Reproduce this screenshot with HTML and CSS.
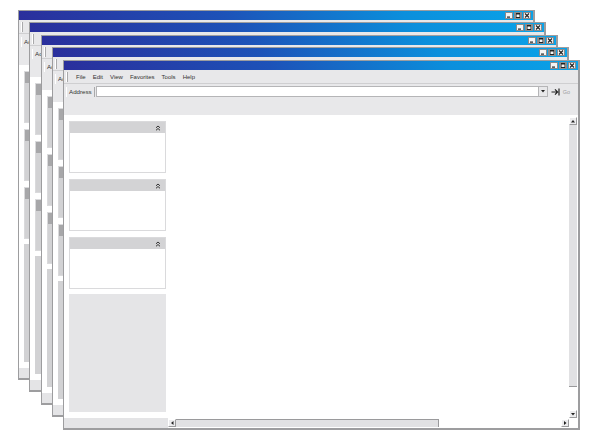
FILE: index.html
```html
<!DOCTYPE html>
<html lang="en">
<head>
  <meta charset="UTF-8" />
  <title>Windows</title>
  <link rel="stylesheet" href="styles.css">
</head>
<body>
  <div class="desk" id="desk">
    <div class="window win-5" id="plantilla">
      <div class="titlebar">
        <span class="ctl"><svg width="6" height="5" viewBox="0 0 6 5"><rect x="1" y="3.5" width="3" height="1.2" fill="#222"/></svg></span>
        <span class="ctl"><svg width="6" height="5" viewBox="0 0 6 5"><rect x="1" y="0.5" width="4" height="4" fill="none" stroke="#222" stroke-width="1"/><rect x="1" y="0.5" width="4" height="1" fill="#222"/></svg></span>
        <span class="ctl"><svg width="6" height="5" viewBox="0 0 6 5"><path d="M1 0.5 L5 4.5 M5 0.5 L1 4.5" stroke="#222" stroke-width="1.1"/></svg></span>
      </div>

      <div class="menubar">
        <span class="grip"></span>
        <span>File</span>
        <span>Edit</span>
        <span>View</span>
        <span>Favorites</span>
        <span>Tools</span>
        <span>Help</span>
      </div>

      <div class="addressbar">
        <span class="addr-label">Address</span>
        <div class="addr-input">
          <span class="addr-drop"><svg width="4" height="3" viewBox="0 0 4 3"><path d="M0 0 H4 L2 2.5 Z" fill="#222"/></svg></span>
        </div>
        <span class="go">
          <svg width="9" height="8" viewBox="0 0 9 8"><path d="M0.5 4 H6.5 M4 1.3 L6.6 4 L4 6.7 M8 0.5 V7.5" stroke="#222" stroke-width="1.2" fill="none"/></svg>
          <span>Go</span>
        </span>
      </div>

      <div class="band"></div>

      <div class="main">
        <aside class="sidebar">
          <div class="panel">
            <div class="panel-head"><svg width="6" height="6" viewBox="0 0 6 6"><path d="M1 2.8 L3 1 L5 2.8 M1 5.3 L3 3.5 L5 5.3" stroke="#333" stroke-width="1" fill="none"/></svg></div>
            <div class="panel-body"></div>
          </div>
          <div class="panel">
            <div class="panel-head"><svg width="6" height="6" viewBox="0 0 6 6"><path d="M1 2.8 L3 1 L5 2.8 M1 5.3 L3 3.5 L5 5.3" stroke="#333" stroke-width="1" fill="none"/></svg></div>
            <div class="panel-body"></div>
          </div>
          <div class="panel">
            <div class="panel-head"><svg width="6" height="6" viewBox="0 0 6 6"><path d="M1 2.8 L3 1 L5 2.8 M1 5.3 L3 3.5 L5 5.3" stroke="#333" stroke-width="1" fill="none"/></svg></div>
            <div class="panel-body"></div>
          </div>
          <div class="side-fill"></div>
        </aside>

        <section class="page"></section>

        <div class="vscroll">
          <span class="sbtn"><svg width="4" height="3" viewBox="0 0 4 3"><path d="M0 2.5 H4 L2 0 Z" fill="#222"/></svg></span>
          <span class="vthumb"></span>
          <span class="sbtn"><svg width="4" height="3" viewBox="0 0 4 3"><path d="M0 0 H4 L2 2.5 Z" fill="#222"/></svg></span>
        </div>
      </div>

      <div class="bottombar">
        <span class="status"></span>
        <span class="sbtn"><svg width="3" height="4" viewBox="0 0 3 4"><path d="M2.5 0 V4 L0 2 Z" fill="#222"/></svg></span>
        <span class="hthumb"></span>
        <span class="hspace"></span>
        <span class="sbtn"><svg width="3" height="4" viewBox="0 0 3 4"><path d="M0 0 V4 L2.5 2 Z" fill="#222"/></svg></span>
        <span class="corner"></span>
      </div>
    </div>
  </div>

  <script>
    // las ventanas de atrás son copias de la de delante, de la más lejana a la más cercana
    const plantilla = document.getElementById('plantilla');
    const desk = document.getElementById('desk');
    for (let i = 1; i <= 4; i++) {
      const copia = plantilla.cloneNode(true);
      copia.removeAttribute('id');
      copia.classList.remove('win-5');
      copia.classList.add('win-' + i, 'inactive');
      desk.insertBefore(copia, plantilla);
    }
  </script>
</body>
</html>
```

FILE: styles.css
```css
:root {
  --chrome: #e8e8ea;
  --border: #9d9d9f;
  --head: #d3d3d5;
  --track: #e1e1e3;
  --text: #333;
}

* {
  box-sizing: border-box;
}

body {
  margin: 0;
  background: #fff;
  font-family: 'Liberation Sans', Arial, sans-serif;
  color: var(--text);
}

.desk {
  position: relative;
  width: 600px;
  height: 440px;
  overflow: hidden;
}

/* cada ventana en su sitio del escritorio */
.window {
  position: absolute;
  width: 517px;
  height: 370px;
  display: flex;
  flex-direction: column;
  background: var(--chrome);
  border: 1px solid var(--border);
  border-right-width: 2px;
  border-bottom-width: 2px;
}

.win-1 { left: 18px; top: 10px; }
.win-2 { left: 29px; top: 22px; }
.win-3 { left: 41px; top: 35px; }
.win-4 { left: 52px; top: 47px; }
.win-5 { left: 63px; top: 60px; }

.titlebar {
  height: 9px;
  flex: none;
  display: flex;
  align-items: center;
  justify-content: flex-end;
  gap: 1px;
  padding-right: 2px;
  background: linear-gradient(to right, #2a2f9c 0%, #1d52b8 40%, #0b8fdc 75%, #0aa2e8 100%);
}

.ctl {
  width: 8px;
  height: 7px;
  display: flex;
  align-items: center;
  justify-content: center;
  background: #f4f4f4;
  border: 1px solid #8a8a8c;
}

.menubar {
  height: 14px;
  flex: none;
  display: flex;
  align-items: center;
  gap: 7px;
  padding-left: 2px;
  font-size: 6px;
  border-bottom: 1px solid #cfcfd1;
}

.grip {
  width: 2px;
  height: 10px;
  margin-right: 1px;
  border-left: 1px solid #fff;
  border-right: 1px solid #a9a9ab;
}

.addressbar {
  height: 15px;
  flex: none;
  display: flex;
  align-items: center;
  padding: 0 8px 0 2px;
}

.addr-label {
  height: 10px;
  display: flex;
  align-items: center;
  padding: 0 2px;
  font-size: 6.2px;
  border-left: 1px solid #fff;
  border-right: 1px solid #a9a9ab;
}

.addr-input {
  flex: 1;
  height: 11px;
  margin-left: 1px;
  display: flex;
  justify-content: flex-end;
  align-items: center;
  background: #fff;
  border: 1px solid #b5b5b7;
}

.addr-drop {
  width: 9px;
  height: 9px;
  display: flex;
  align-items: center;
  justify-content: center;
  background: var(--chrome);
  border-left: 1px solid #b5b5b7;
}

.go {
  display: flex;
  align-items: center;
  gap: 3px;
  margin-left: 3px;
  font-size: 5.5px;
  color: #a0a0a2;
}

.band {
  height: 16px;
  flex: none;
}

.main {
  flex: 1;
  display: flex;
  background: #fff;
}

.sidebar {
  width: 103px;
  flex: none;
  display: flex;
  flex-direction: column;
  gap: 6px;
  padding: 6px 0 6px 5px;
}

.panel {
  width: 97px;
  border: 1px solid #dadadc;
}

.panel-head {
  height: 11px;
  display: flex;
  align-items: center;
  justify-content: flex-end;
  padding-right: 4px;
  background: var(--head);
}

.panel-body {
  height: 39px;
  background: #fff;
}

.side-fill {
  flex: 1;
  width: 97px;
  margin-top: -1px;
  background: #e5e5e7;
}

/* las de atrás se ven apagadas */
.inactive .panel-head {
  background: #a7a7a9;
}

.inactive .panel-body,
.inactive .side-fill {
  background: #d2d2d4;
}

.page {
  flex: 1;
}

.vscroll {
  width: 8px;
  margin-right: 1px;
  display: flex;
  flex-direction: column;
  padding-top: 2px;
}

.sbtn {
  width: 8px;
  height: 8px;
  flex: none;
  display: flex;
  align-items: center;
  justify-content: center;
  background: #ececee;
  border: 1px solid #9a9a9c;
  border-top-color: #fff;
  border-left-color: #fff;
}

.vthumb {
  height: 262px;
  background: var(--track);
  border-bottom: 1px solid #9a9a9c;
}

.vscroll .sbtn:last-child {
  margin-top: auto;
}

.bottombar {
  height: 10px;
  flex: none;
  display: flex;
  align-items: center;
  background: #fff;
}

.status {
  width: 104px;
  height: 100%;
  background: #e4e4e6;
}

.hthumb {
  width: 263px;
  height: 8px;
  background: var(--track);
  border-top: 1px solid #9a9a9c;
  border-right: 1px solid #9a9a9c;
}

.hspace {
  flex: 1;
}

.corner {
  width: 9px;
}
```
